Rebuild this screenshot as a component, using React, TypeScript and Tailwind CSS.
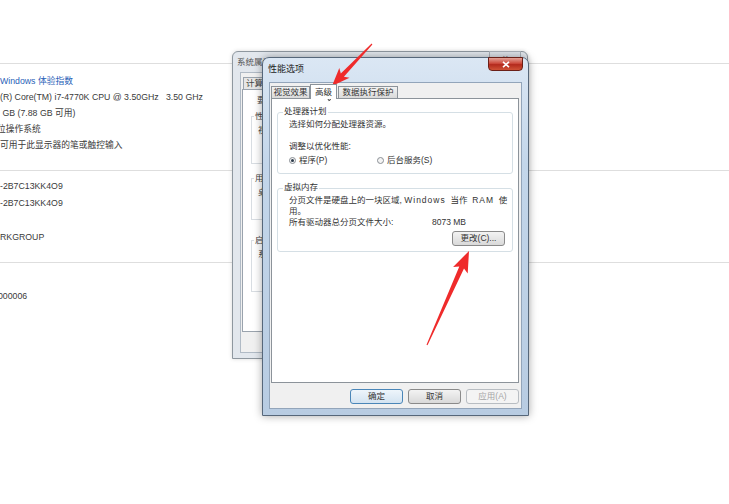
import React from "react";

const F = "font-['Liberation_Sans','Noto_Sans_CJK_SC',sans-serif]";

function arrowPoints(tx: number, ty: number, px: number, py: number, L: number, W: number, sw: number) {
  const dx = px - tx;
  const dy = py - ty;
  const len = Math.hypot(dx, dy);
  const ux = dx / len;
  const uy = dy / len;
  const nx = -uy;
  const ny = ux;
  const pt = (a: number, b: number) => `${a.toFixed(1)},${b.toFixed(1)}`;
  const bx = px - ux * L;
  const by = py - uy * L;
  const wx = px - ux * (L + 3);
  const wy = py - uy * (L + 3);
  return [
    pt(tx + nx * 0.6, ty + ny * 0.6),
    pt(bx + nx * sw, by + ny * sw),
    pt(wx + nx * W, wy + ny * W),
    pt(px, py),
    pt(wx - nx * W, wy - ny * W),
    pt(bx - nx * sw, by - ny * sw),
    pt(tx - nx * 0.6, ty - ny * 0.6),
  ].join(" ");
}

function Background() {
  return (
    <div className={`pt-[63px] text-[8.75px] leading-[16px] text-[#3a3a3a]`}>
      <div className="h-[107px] border-t border-[#dedede] pt-[9px]">
        <div className="whitespace-pre text-[#2a62b8]">Windows 体验指数</div>
        <div className="whitespace-pre">(R) Core(TM) i7-4770K CPU @ 3.50GHz   3.50 GHz</div>
        <div className="whitespace-pre"> GB (7.88 GB 可用)</div>
        <div className="-ml-[3px] whitespace-pre">位操作系统</div>
        <div className="whitespace-pre">可用于此显示器的笔或触控输入</div>
      </div>
      <div className="h-[92px] border-t border-[#dedede] pt-[7px]">
        <div>-2B7C13KK4O9</div>
        <div className="mt-[1px]">-2B7C13KK4O9</div>
        <div className="mt-[18px]">RKGROUP</div>
      </div>
      <div className="border-t border-[#dedede] pt-[25px]">
        <div className="-ml-[2px]">000006</div>
      </div>
    </div>
  );
}

function BackDialog() {
  return (
    <div className="absolute left-[232px] top-[51px] flex h-[308px] w-[296px] flex-col rounded-t-[6px] border border-[#8e979f] bg-[#e2e7ed] shadow-[0_0_4px_rgba(0,0,0,0.15)]">
      <div className="relative flex h-[20px] items-center pl-[4px] text-[8.5px] text-[#555]">
        系统属性
        <div className="absolute right-[6px] top-[-1px] flex h-[15px] w-[32px] items-center justify-center rounded-b-[3px] border border-[#a9b0b8] bg-[#dde2e8] text-[8px] text-[#888]">
          ✕
        </div>
      </div>
      <div className="mx-[7px] mb-[5px] flex flex-1 flex-col border border-[#b0bac5] bg-[#f0f0f0]">
        <div className="flex h-[16px] items-end pl-[2px]">
          <div className="flex h-[12px] w-[40px] items-center border border-b-0 border-[#9aa3ad] bg-[#e6e6e6] pl-[2px] text-[8.5px] text-[#444]">
            计算机名
          </div>
        </div>
        <div className="relative mx-[1px] flex-1 border border-[#9aa3ad] bg-white pl-[8px] text-[8.5px] leading-[12px] text-[#444]">
          <div className="ml-[6px] mt-[4px]">要进行大多数更改</div>
          <div className="relative mt-[10px] h-[48px] border-l border-t border-b border-[#d8dde2]">
            <div className="absolute -top-[7px] left-[2px] bg-white px-[1px]">性能</div>
            <div className="ml-[6px] mt-[7px]">视觉效果</div>
          </div>
          <div className="relative mt-[14px] h-[42px] border-l border-t border-b border-[#d8dde2]">
            <div className="absolute -top-[7px] left-[2px] bg-white px-[1px]">用户配置文件</div>
            <div className="ml-[6px] mt-[7px]">桌面设置</div>
          </div>
          <div className="relative mt-[20px] h-[52px] border-l border-t border-b border-[#d8dde2]">
            <div className="absolute -top-[7px] left-[2px] bg-white px-[1px]">启动和故障恢复</div>
            <div className="ml-[6px] mt-[7px]">系统启动</div>
          </div>
        </div>
        <div className="h-[20px]" />
      </div>
    </div>
  );
}

function Radio({ checked }: { checked: boolean }) {
  return (
    <span className="mr-[3px] inline-flex h-[7px] w-[7px] items-center justify-center rounded-full border border-[#8a8f95] bg-[#f4f4f4]">
      {checked ? <span className="h-[3px] w-[3px] rounded-full bg-[#2b3a4a]" /> : null}
    </span>
  );
}

function Btn({ children, kind }: { children: React.ReactNode; kind?: "default" | "disabled" }) {
  const base = "flex h-[15px] w-[53px] items-center justify-center rounded-[3px] border text-[8.5px]";
  if (kind === "default")
    return (
      <div className={`${base} border-[#4a86b8] bg-[linear-gradient(180deg,#eef5fb,#d3e3f1)] text-[#333]`}>{children}</div>
    );
  if (kind === "disabled")
    return <div className={`${base} border-[#b8bdc2] bg-[#f4f4f4] text-[#a5a5a5]`}>{children}</div>;
  return (
    <div className={`${base} border-[#8a8a8a] bg-[linear-gradient(180deg,#f3f3f3,#d9d9d9)] text-[#333]`}>{children}</div>
  );
}

function FrontDialog() {
  return (
    <div className="absolute left-[262px] top-[57px] flex h-[359px] w-[267px] flex-col rounded-t-[7px] border border-[#56677a] bg-[linear-gradient(180deg,#dbe7f4,#c3d6ea_30%,#b8cce2)] shadow-[0_0_9px_rgba(0,0,0,0.35)]">
      <div className="relative flex h-[24px] shrink-0 items-center pl-[5px] text-[9px] text-[#222]">
        性能选项
        <div className="absolute right-[5px] top-[-1px] flex h-[14px] w-[35px] items-center justify-center rounded-b-[4px] border border-[#6b2018] bg-[linear-gradient(180deg,#e4a196,#cc4a3c_45%,#b32a1d_55%,#cf5236)]">
          <svg width="8" height="7" viewBox="0 0 8 7">
            <path d="M1 0.8 L7 6.2 M7 0.8 L1 6.2" stroke="#fff" strokeWidth="1.6" />
          </svg>
        </div>
      </div>
      <div className="mx-[6px] flex flex-1 flex-col border border-[#93a5ba] bg-[#f0f0f0]">
        <div className="flex h-[15px] shrink-0 items-end pl-[1px] text-[8.5px] text-[#333]">
          <div className="flex h-[12px] w-[39px] items-center justify-center border border-b-0 border-[#8c939a] bg-[linear-gradient(180deg,#f2f2f2,#dadada)]">
            视觉效果
          </div>
          <div className="relative z-10 -mb-[1px] flex h-[15px] w-[27px] items-center justify-center border border-b-0 border-[#8c939a] bg-white">
            高级
          </div>
          <div className="ml-[1px] flex h-[12px] w-[60px] items-center justify-center border border-b-0 border-[#8c939a] bg-[linear-gradient(180deg,#f2f2f2,#dadada)]">
            数据执行保护
          </div>
        </div>
        <div className="ml-[1px] mr-[2px] h-[285px] shrink-0 border border-[#8c939a] bg-white px-[5px] pt-[13px] text-[8.5px] text-[#333]">
          <div className="relative h-[62px] rounded-[3px] border border-[#d5dfe5] pl-[11px] pt-[5px]">
            <div className="absolute -top-[8px] left-[5px] bg-white px-[1px] leading-[12px]">处理器计划</div>
            <div className="leading-[12px]">选择如何分配处理器资源。</div>
            <div className="mt-[10px] leading-[12px]">调整以优化性能:</div>
            <div className="mt-[2px] flex h-[12px] items-center leading-[12px]">
              <Radio checked />
              <span className="w-[78px]">程序(P)</span>
              <Radio checked={false} />
              <span>后台服务(S)</span>
            </div>
          </div>
          <div className="relative mt-[14px] h-[64px] rounded-[3px] border border-[#d5dfe5] pl-[11px] pr-[7px] pt-[6px]">
            <div className="absolute -top-[8px] left-[5px] bg-white px-[1px] leading-[12px]">虚拟内存</div>
            <div className="whitespace-pre leading-[11px]">
              分页文件是硬盘上的一块区域, <span className="tracking-[1px]">Windows</span>  当作  <span className="tracking-[1px]">RAM</span>  使
            </div>
            <div className="leading-[11px]">用。</div>
            <div className="flex leading-[11px]">
              <span className="w-[143px]">所有驱动器总分页文件大小:</span>
              <span>8073 MB</span>
            </div>
            <div className="mt-[3px] flex justify-end">
              <Btn>更改(C)...</Btn>
            </div>
          </div>
        </div>
        <div className="mt-[6px] flex justify-end gap-[5px] pr-[2px]">
          <Btn kind="default">确定</Btn>
          <Btn>取消</Btn>
          <Btn kind="disabled">应用(A)</Btn>
        </div>
      </div>
      <div className="h-[6px] shrink-0" />
    </div>
  );
}

export default function App() {
  return (
    <div className={`relative h-[504px] w-[729px] overflow-hidden bg-white ${F}`}>
      <Background />
      <BackDialog />
      <FrontDialog />
      <svg className="pointer-events-none absolute left-0 top-0" width="729" height="504">
        <polygon points={arrowPoints(372, 44, 332, 86, 15, 7, 2.2)} fill="#ef2b2b" />
        <polygon points={arrowPoints(427, 345, 469, 251, 18, 8, 2.6)} fill="#ef2b2b" />
        <polygon
          points="324,88 324,99 326.8,96.4 328.8,100.6 330.4,99.9 328.4,95.8 332,95.6"
          fill="#fff"
          stroke="#111"
          strokeWidth="0.8"
          strokeLinejoin="round"
        />
      </svg>
    </div>
  );
}
